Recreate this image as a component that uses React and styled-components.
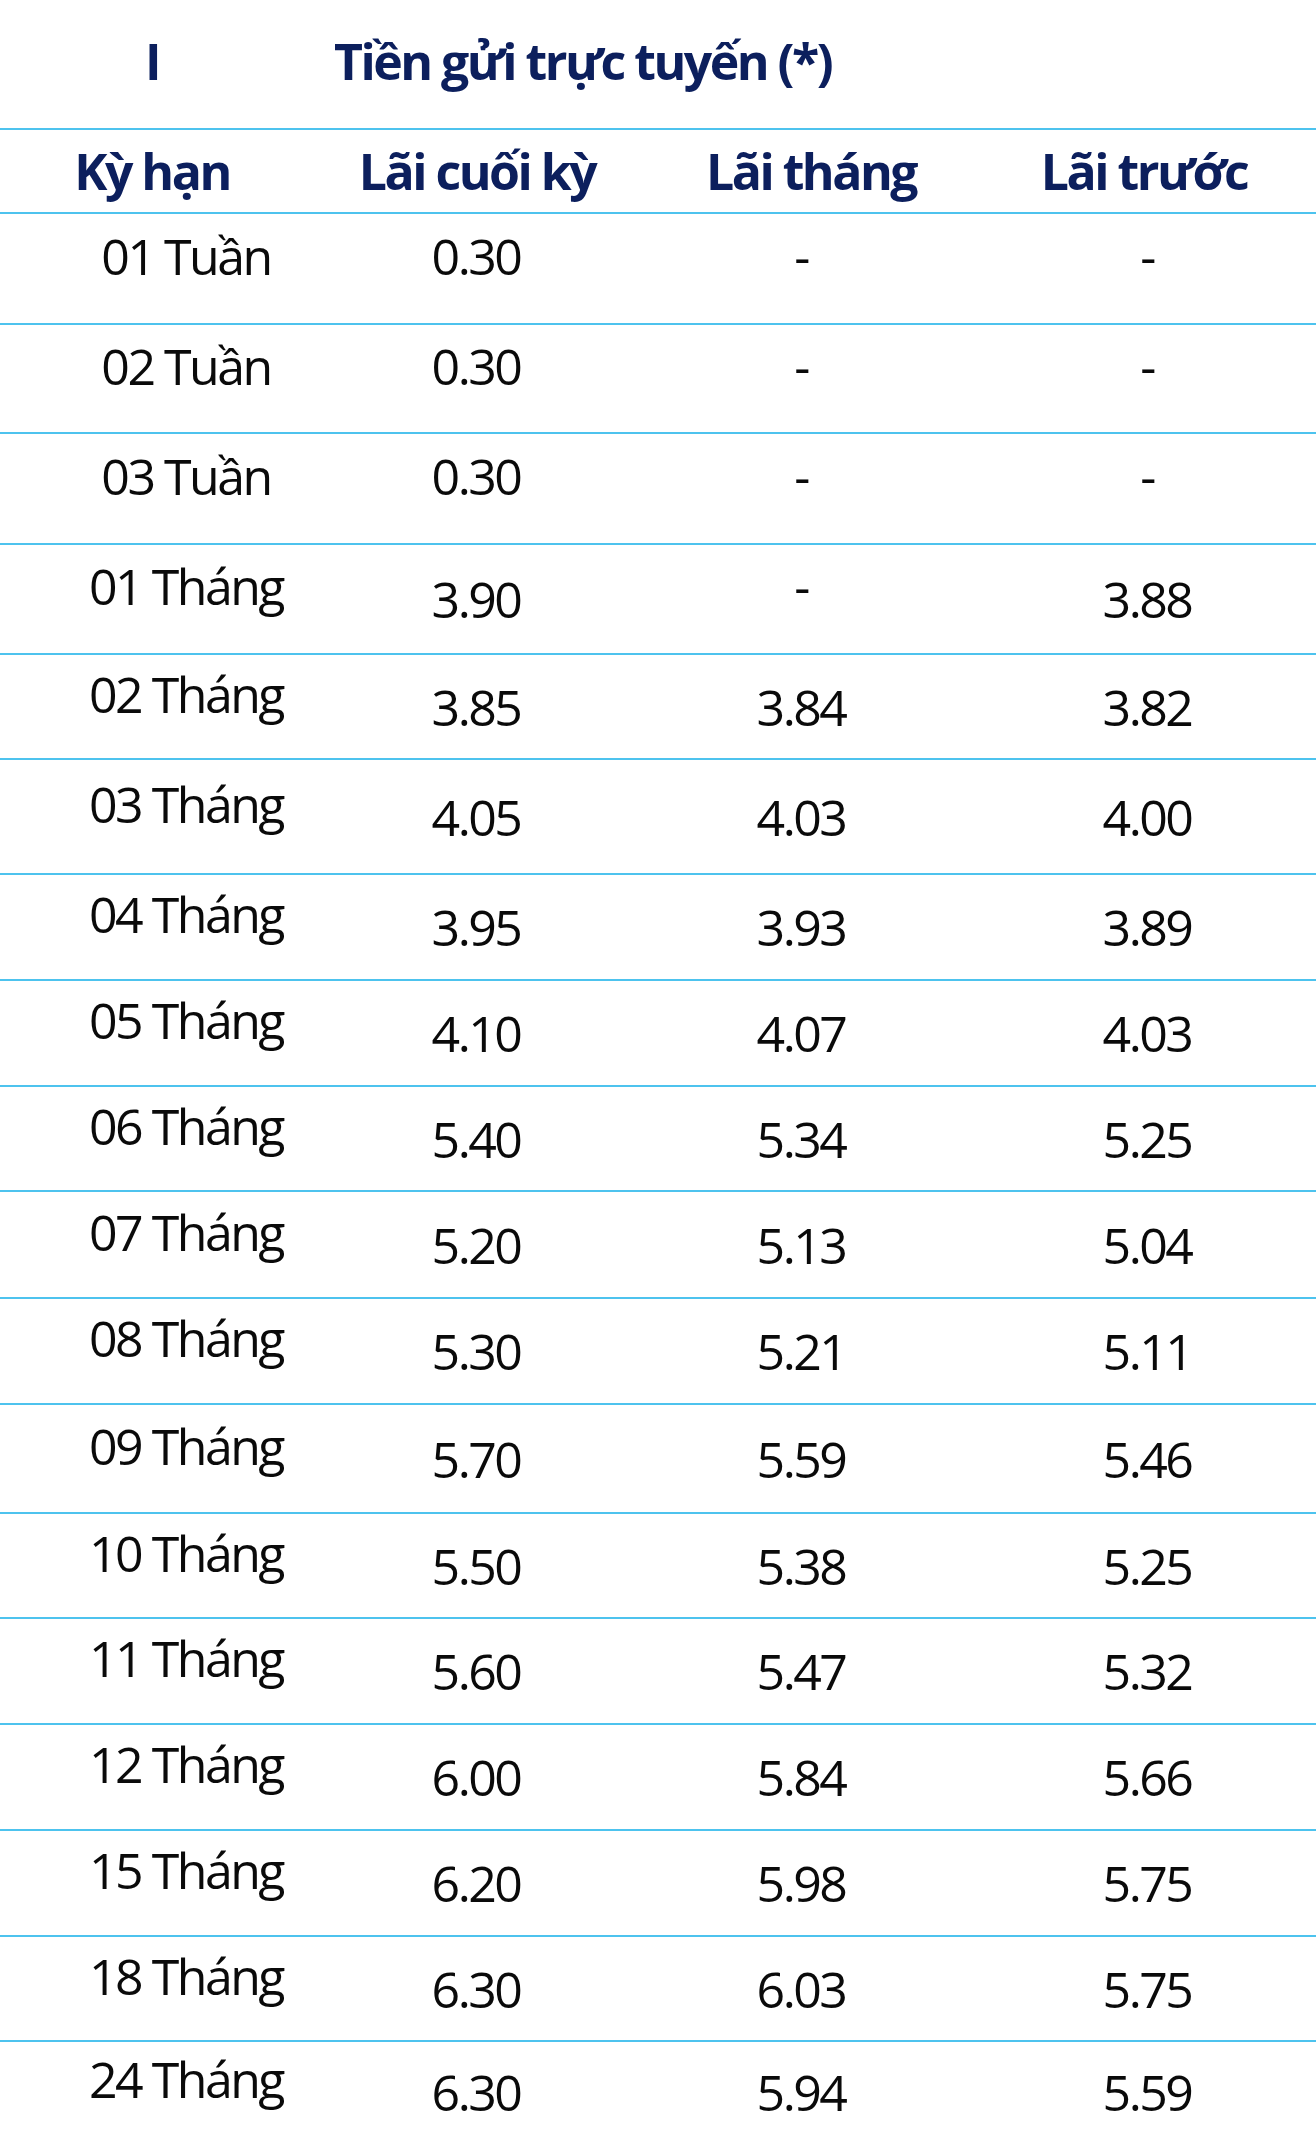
import styled, { createGlobalStyle } from "styled-components"

const GlobalStyle = createGlobalStyle`
    body {
        margin: 0;
        background: #fff;
    }
`

const rates = [
    { term: '01 Tuần', h: 111, weekly: true, values: ['0.30', '-', '-'] },
    { term: '02 Tuần', h: 109, weekly: true, values: ['0.30', '-', '-'] },
    { term: '03 Tuần', h: 111, weekly: true, values: ['0.30', '-', '-'] },
    { term: '01 Tháng', h: 110, values: ['3.90', '-', '3.88'] },
    { term: '02 Tháng', h: 105, values: ['3.85', '3.84', '3.82'] },
    { term: '03 Tháng', h: 115, values: ['4.05', '4.03', '4.00'] },
    { term: '04 Tháng', h: 106, values: ['3.95', '3.93', '3.89'] },
    { term: '05 Tháng', h: 106, values: ['4.10', '4.07', '4.03'] },
    { term: '06 Tháng', h: 105, values: ['5.40', '5.34', '5.25'] },
    { term: '07 Tháng', h: 107, values: ['5.20', '5.13', '5.04'] },
    { term: '08 Tháng', h: 106, values: ['5.30', '5.21', '5.11'] },
    { term: '09 Tháng', h: 109, values: ['5.70', '5.59', '5.46'] },
    { term: '10 Tháng', h: 105, values: ['5.50', '5.38', '5.25'] },
    { term: '11 Tháng', h: 106, values: ['5.60', '5.47', '5.32'] },
    { term: '12 Tháng', h: 106, values: ['6.00', '5.84', '5.66'] },
    { term: '15 Tháng', h: 106, values: ['6.20', '5.98', '5.75'] },
    { term: '18 Tháng', h: 105, values: ['6.30', '6.03', '5.75'] },
    { term: '24 Tháng', h: 100, last: true, values: ['6.30', '5.94', '5.59'] },
]

export default function App() {
    return (
        <>
            <GlobalStyle />
            <Table>
                <TitleRow>
                    <TitleIndex>I</TitleIndex>
                    <TitleText>Tiền gửi trực tuyến (*)</TitleText>
                </TitleRow>
                <HeadRow>
                    <HeadCell>Kỳ hạn</HeadCell>
                    <HeadCell>Lãi cuối kỳ</HeadCell>
                    <HeadCell>Lãi tháng</HeadCell>
                    <HeadCell>Lãi trước</HeadCell>
                </HeadRow>
                {rates.map((r) => (
                    <DataRow key={r.term} $h={r.h} $last={r.last}>
                        <Cell $raised>{r.term}</Cell>
                        {r.values.map((v, i) => (
                            <Cell key={i} $raised={r.weekly || v === '-'}>{v}</Cell>
                        ))}
                    </DataRow>
                ))}
            </Table>
        </>
    )
}

const Table = styled.div`
    width: 100%;
    font-family: "Open Sans", "Noto Sans", sans-serif;
    font-size: 50px;
    line-height: 50px;
    letter-spacing: -2.5px;
`

const Line = styled.div`
    display: grid;
    align-items: center;
    box-sizing: border-box;
    border-bottom: 2px solid #4dc3ee;
`

const TitleRow = styled(Line)`
    height: 130px;
    grid-template-columns: 304px 1fr;
    color: #0c1f5d;
    font-weight: 700;
    padding-bottom: 6px;
`

const TitleIndex = styled.div`
    text-align: center;
`

const TitleText = styled.div`
    padding-left: 30px;
`

const HeadRow = styled(Line)`
    height: 84px;
    grid-template-columns: 304px 346px 322px 344px;
`

const HeadCell = styled.div`
    text-align: center;
    color: #0c1f5d;
    font-weight: 700;
`

const DataRow = styled(Line)`
    height: ${(p) => p.$h}px;
    grid-template-columns: 372px 208px 442px 250px;
    border-bottom: ${(p) => (p.$last ? 'none' : '2px solid #4dc3ee')};
`

const Cell = styled.div`
    text-align: center;
    white-space: nowrap;
    color: #0a0a0a;
    padding-bottom: ${(p) => (p.$raised ? '26px' : '0')};
`
